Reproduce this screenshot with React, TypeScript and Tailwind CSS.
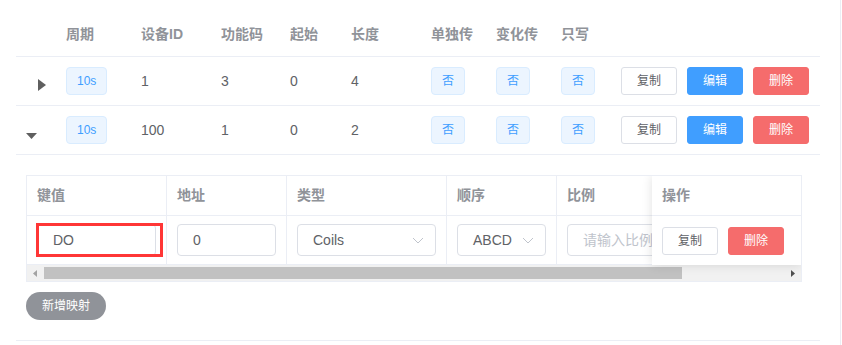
import React from 'react';

const font = "font-['Liberation_Sans','Noto_Sans_CJK_SC',sans-serif]";

const mainHeaders = [
    { title: '', w: 'w-[40px]' },
    { title: '周期', w: 'w-[75px]' },
    { title: '设备ID', w: 'w-[80px]' },
    { title: '功能码', w: 'w-[69px]' },
    { title: '起始', w: 'w-[61px]' },
    { title: '长度', w: 'w-[80px]' },
    { title: '单独传', w: 'w-[65px]' },
    { title: '变化传', w: 'w-[65px]' },
    { title: '只写', w: 'w-[60px]' },
    { title: '', w: 'w-[209px]' },
];

const rows = [
    { period: '10s', id: '1', code: '3', start: '0', len: '4', expanded: false },
    { period: '10s', id: '100', code: '1', start: '0', len: '2', expanded: true },
];

function Tag({ children }: { children: React.ReactNode }) {
    return (
        <span className="inline-flex items-center h-[28px] px-[10px] rounded-[4px] border border-[#d9ecff] bg-[#ecf5ff] text-[12px] text-[#409eff]">
            {children}
        </span>
    );
}

function Btn({ kind, children }: { kind: 'default' | 'primary' | 'danger'; children: React.ReactNode }) {
    const cls =
        kind === 'primary'
            ? 'bg-[#409eff] border-[#409eff] text-white'
            : kind === 'danger'
            ? 'bg-[#f56c6c] border-[#f56c6c] text-white'
            : 'bg-white border-[#dcdfe6] text-[#606266]';
    return (
        <button className={`w-[56px] h-[28px] rounded-[3px] border text-[12px] flex items-center justify-center ${cls}`}>
            {children}
        </button>
    );
}

function Chevron() {
    return (
        <svg width="12" height="7" viewBox="0 0 12 7" fill="none">
            <path d="M1 1l5 5 5-5" stroke="#c0c4cc" strokeWidth="1" />
        </svg>
    );
}

function SubTable() {
    return (
        <div className="w-[776px] border border-[#ebeef5]">
            <div className="relative overflow-hidden">
                <div className="flex h-[40px] border-b border-[#ebeef5] text-[14px] font-bold text-[#909399]">
                    <div className="w-[140px] shrink-0 pl-[10px] flex items-center border-r border-[#ebeef5]">键值</div>
                    <div className="w-[120px] shrink-0 pl-[10px] flex items-center border-r border-[#ebeef5]">地址</div>
                    <div className="w-[160px] shrink-0 pl-[10px] flex items-center border-r border-[#ebeef5]">类型</div>
                    <div className="w-[110px] shrink-0 pl-[10px] flex items-center border-r border-[#ebeef5]">顺序</div>
                    <div className="w-[140px] shrink-0 pl-[10px] flex items-center border-r border-[#ebeef5]">比例</div>
                    <div className="w-[150px] shrink-0 pl-[10px] flex items-center">操作</div>
                </div>
                <div className="flex h-[49px] border-b border-[#ebeef5] text-[14px] text-[#606266]">
                    <div className="w-[140px] shrink-0 px-[10px] flex items-center border-r border-[#ebeef5]">
                        <div className="relative w-full">
                            <div className="h-[32px] w-full rounded-[4px] border border-[#dcdfe6] px-[15px] flex items-center">DO</div>
                            <div className="absolute left-[-1px] top-[-1px] w-[127px] h-[34px] border-[3px] border-[#ff3636]"></div>
                        </div>
                    </div>
                    <div className="w-[120px] shrink-0 px-[10px] flex items-center border-r border-[#ebeef5]">
                        <div className="h-[32px] w-full rounded-[4px] border border-[#dcdfe6] px-[15px] flex items-center">0</div>
                    </div>
                    <div className="w-[160px] shrink-0 px-[10px] flex items-center border-r border-[#ebeef5]">
                        <div className="h-[32px] w-full rounded-[4px] border border-[#dcdfe6] pl-[15px] pr-[11px] flex items-center justify-between">
                            <span>Coils</span>
                            <Chevron />
                        </div>
                    </div>
                    <div className="w-[110px] shrink-0 px-[10px] flex items-center border-r border-[#ebeef5]">
                        <div className="h-[32px] w-full rounded-[4px] border border-[#dcdfe6] pl-[15px] pr-[11px] flex items-center justify-between">
                            <span>ABCD</span>
                            <Chevron />
                        </div>
                    </div>
                    <div className="w-[140px] shrink-0 px-[10px] flex items-center border-r border-[#ebeef5]">
                        <div className="h-[32px] w-full rounded-[4px] border border-[#dcdfe6] px-[15px] flex items-center text-[#c0c4cc] whitespace-nowrap overflow-hidden">
                            请输入比例
                        </div>
                    </div>
                </div>
                <div className="absolute right-0 top-0 w-[149px] h-[89px] bg-white shadow-[0_0_10px_rgba(0,0,0,0.12)]">
                    <div className="h-[40px] border-b border-[#ebeef5] pl-[10px] flex items-center text-[14px] font-bold text-[#909399]">操作</div>
                    <div className="h-[49px] pl-[10px] flex items-center gap-[10px]">
                        <Btn kind="default">复制</Btn>
                        <Btn kind="danger">删除</Btn>
                    </div>
                </div>
                <div className="flex items-center h-[16px] bg-[#f1f1f1]">
                    <div className="w-[16px] h-full flex items-center justify-center">
                        <svg width="4" height="7" viewBox="0 0 4 7"><path d="M4 0v7L0 3.5z" fill="#a3a3a3" /></svg>
                    </div>
                    <div className="ml-[1px] w-[638px] h-[12px] bg-[#c1c1c1]"></div>
                    <div className="flex-1"></div>
                    <div className="w-[16px] h-full flex items-center justify-center">
                        <svg width="4" height="7" viewBox="0 0 4 7"><path d="M0 0v7l4-3.5z" fill="#505050" /></svg>
                    </div>
                </div>
            </div>
        </div>
    );
}

export default function App() {
    return (
        <div className={`w-[842px] h-[345px] bg-white overflow-hidden ${font}`}>
            <div className="w-[841px] h-full border-r border-[#ebeef5]">
                <div className="ml-[16px] w-[804px] pt-[12px]">
                    <div className="flex h-[45px] border-b border-[#ebeef5] text-[14px] font-bold text-[#909399]">
                        {mainHeaders.map((h, i) => (
                            <div key={i} className={`${h.w} shrink-0 pl-[10px] flex items-center`}>
                                {h.title}
                            </div>
                        ))}
                    </div>
                    {rows.map((r, i) => (
                        <div key={i}>
                            <div className="flex h-[49px] border-b border-[#ebeef5] text-[14px] text-[#606266]">
                                <div className="w-[40px] shrink-0 flex items-center">
                                    {r.expanded ? (
                                        <svg className="ml-[10px] mt-[12px]" width="11" height="6" viewBox="0 0 11 6">
                                            <path d="M0 0h11L5.5 6z" fill="#5f5f5f" />
                                        </svg>
                                    ) : (
                                        <svg className="ml-[22px] mt-[8px]" width="8" height="12" viewBox="0 0 8 12">
                                            <path d="M0 0v12l8-6z" fill="#5f5f5f" />
                                        </svg>
                                    )}
                                </div>
                                <div className="w-[75px] shrink-0 pl-[10px] flex items-center"><Tag>{r.period}</Tag></div>
                                <div className="w-[80px] shrink-0 pl-[10px] flex items-center">{r.id}</div>
                                <div className="w-[69px] shrink-0 pl-[10px] flex items-center">{r.code}</div>
                                <div className="w-[61px] shrink-0 pl-[10px] flex items-center">{r.start}</div>
                                <div className="w-[80px] shrink-0 pl-[10px] flex items-center">{r.len}</div>
                                <div className="w-[65px] shrink-0 pl-[10px] flex items-center"><Tag>否</Tag></div>
                                <div className="w-[65px] shrink-0 pl-[10px] flex items-center"><Tag>否</Tag></div>
                                <div className="w-[60px] shrink-0 pl-[10px] flex items-center"><Tag>否</Tag></div>
                                <div className="w-[209px] shrink-0 pl-[10px] flex items-center gap-[10px]">
                                    <Btn kind="default">复制</Btn>
                                    <Btn kind="primary">编辑</Btn>
                                    <Btn kind="danger">删除</Btn>
                                </div>
                            </div>
                            {r.expanded && (
                                <div className="pt-[20px] pl-[10px] pb-[20px] border-b border-[#ebeef5]">
                                    <SubTable />
                                    <button className="mt-[10px] w-[80px] h-[28px] rounded-full bg-[#909399] text-white text-[12px] flex items-center justify-center">
                                        新增映射
                                    </button>
                                </div>
                            )}
                        </div>
                    ))}
                </div>
            </div>
        </div>
    );
}
